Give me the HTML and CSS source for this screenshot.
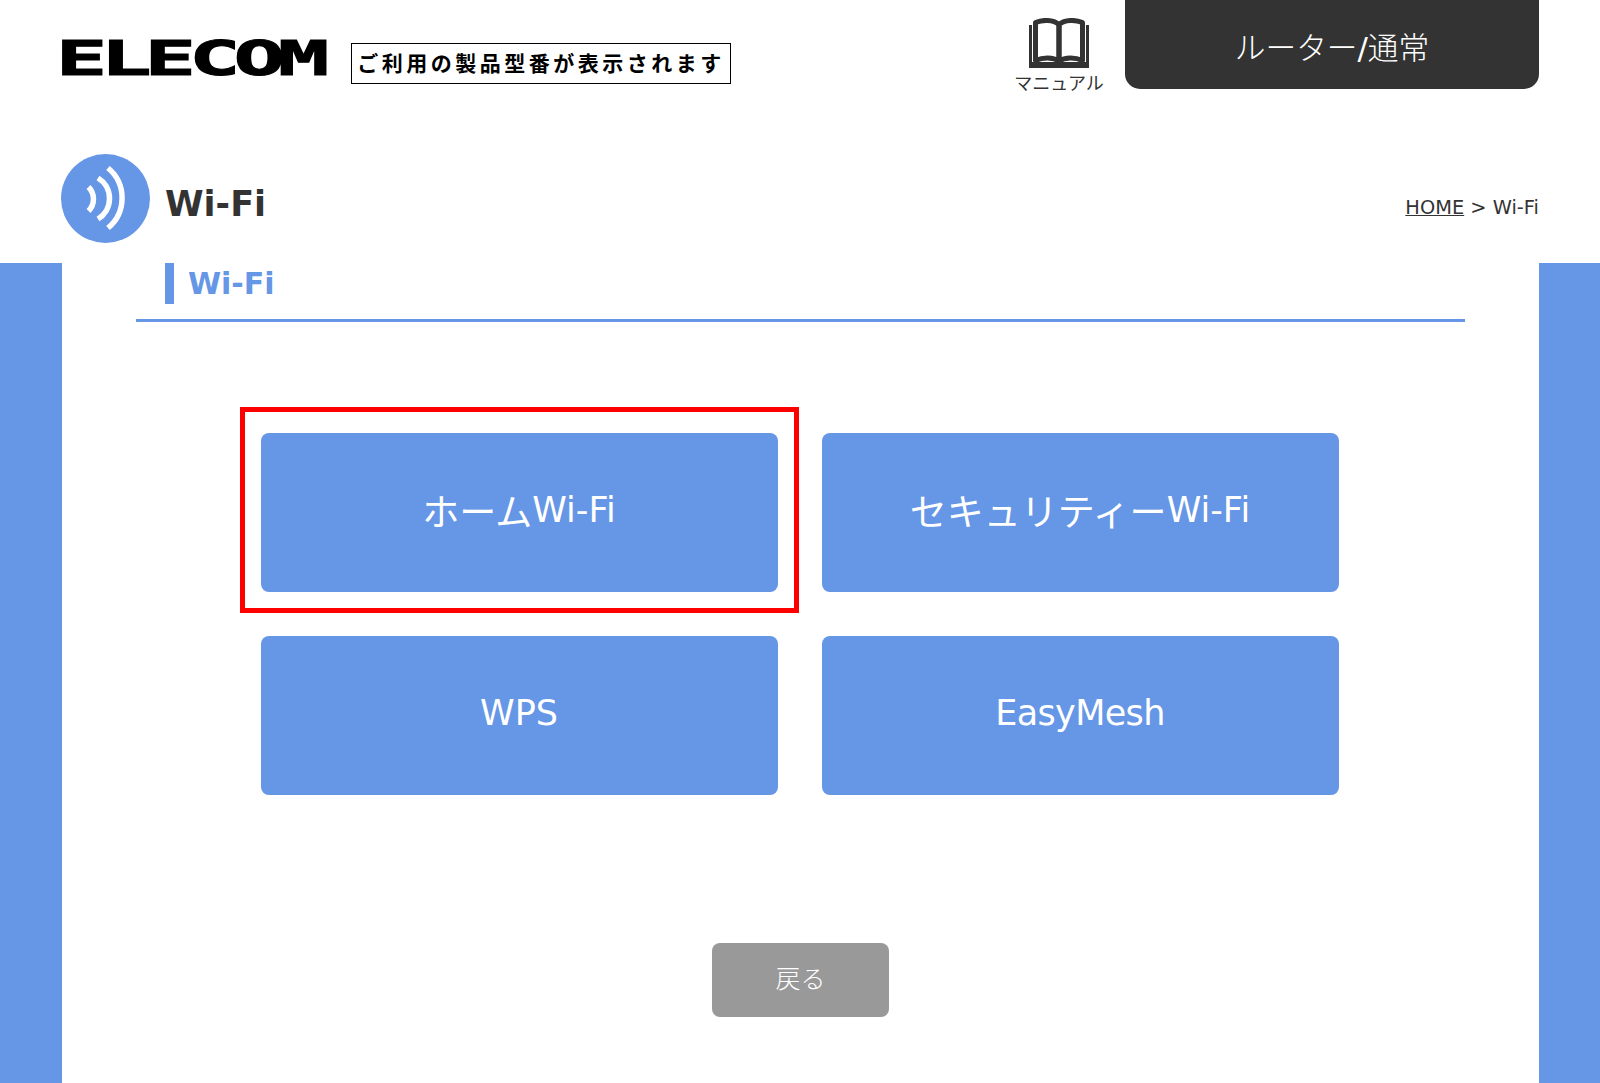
FILE: index.html
```html
<!DOCTYPE html>
<html lang="ja">
<head>
  <meta charset="UTF-8">
  <meta name="viewport" content="width=device-width, initial-scale=1.0">
  <title>Wi-Fi</title>
  <link rel="stylesheet" href="styles.css">
</head>
<body>
  <header class="top-bar">
    <div class="brand">
      <div class="logo">ELECOM</div>
      <div class="model-name">ご利用の製品型番が表示されます</div>
    </div>
    <div class="top-right">
      <a class="manual" href="#">
        <svg class="manual-icon" viewBox="0 0 60 50" fill="none" stroke="#333">
          <path d="M1.5 7V48.5H58.5V7" stroke-width="3"/>
          <path d="M6.5 4.5C14 1.5 24 1.5 30 6.5V43C24 39 14 39 6.5 42.5Z" stroke-width="5" stroke-linejoin="round"/>
          <path d="M53.5 4.5C46 1.5 36 1.5 30 6.5V43C36 39 46 39 53.5 42.5Z" stroke-width="5" stroke-linejoin="round"/>
          <path d="M3 46.5H57" stroke-width="5"/>
        </svg>
        <span>マニュアル</span>
      </a>
      <div class="mode-tab"><span class="jp">ルーター</span>/<span class="jp">通常</span></div>
    </div>
  </header>

  <div class="title-row">
    <div class="title-left">
      <svg class="title-icon" viewBox="0 0 89 89">
        <circle cx="44.5" cy="44.5" r="44.5" fill="#6696e6"/>
        <g fill="none" stroke="#fff" stroke-width="5.5">
          <path d="M27.5 33A17 17 0 0 1 27.5 57"/>
          <path d="M37 24A24 24 0 0 1 37 65"/>
          <path d="M47 14A39 39 0 0 1 47 74"/>
        </g>
      </svg>
      <h1>Wi-Fi</h1>
    </div>
    <div class="breadcrumb"><a href="#">HOME</a> &gt; Wi-Fi</div>
  </div>

  <main class="main">
    <div class="content">
      <div class="section-head">
        <h2>Wi-Fi</h2>
      </div>
      <div class="menu-grid">
        <a class="menu-btn selected" href="#"><span class="jp">ホーム</span>Wi-Fi</a>
        <a class="menu-btn" href="#"><span class="jp">セキュリティー</span>Wi-Fi</a>
        <a class="menu-btn" href="#">WPS</a>
        <a class="menu-btn tight" href="#">EasyMesh</a>
      </div>
      <div class="back-row">
        <a class="back-btn" href="#">戻る</a>
      </div>
    </div>
  </main>
</body>
</html>
```

FILE: styles.css
```css
* {
  box-sizing: border-box;
}

html, body {
  margin: 0;
  height: 100%;
  overflow: hidden;
}

body {
  display: flex;
  flex-direction: column;
  font-family: "DejaVu Sans", "Noto Sans CJK JP", sans-serif;
  color: #333;
  background: #fff;
}

a {
  color: inherit;
}

.jp {
  font-family: "Noto Sans CJK JP", sans-serif;
  font-weight: 300;
}

.top-bar {
  display: flex;
  justify-content: space-between;
  height: 154px;
  padding: 0 61px;
}

.brand {
  display: flex;
  align-items: flex-start;
}

.logo {
  width: 267px;
  margin-top: 33px;
  font-family: "DejaVu Sans Mono", monospace;
  font-size: 48px;
  line-height: 50px;
  font-weight: 700;
  letter-spacing: -3.8px;
  color: #000;
  -webkit-text-stroke: 1px #000;
  transform: translateX(-5px) scaleX(1.77);
  transform-origin: left center;
  white-space: nowrap;
}

.model-name {
  width: 380px;
  height: 41px;
  margin: 43px 0 0 23px;
  border: 1px solid #000;
  font-family: "Noto Sans CJK JP", sans-serif;
  font-size: 21px;
  line-height: 37px;
  font-weight: 700;
  letter-spacing: 3.5px;
  color: #000;
  text-align: center;
  white-space: nowrap;
}

.top-right {
  display: flex;
  align-items: flex-start;
}

.manual {
  display: flex;
  flex-direction: column;
  align-items: center;
  width: 90px;
  margin-top: 18px;
  margin-right: 21px;
  font-size: 18px;
  line-height: 24px;
  font-family: "Noto Sans CJK JP", sans-serif;
  font-weight: 400;
  text-decoration: none;
}

.manual-icon {
  display: block;
  width: 60px;
  height: 50px;
  margin-bottom: 2px;
}

.mode-tab {
  width: 414px;
  height: 89px;
  padding-top: 24px;
  background: #333;
  border-radius: 0 0 15px 15px;
  color: #fff;
  font-size: 30.7px;
  line-height: 44px;
  text-align: center;
}

.title-row {
  display: flex;
  justify-content: space-between;
  align-items: flex-start;
  height: 109px;
  padding: 0 61px;
}

.title-left {
  display: flex;
  align-items: center;
  gap: 15px;
}

.title-icon {
  display: block;
  width: 89px;
  height: 89px;
}

h1 {
  margin: 10px 0 0;
  font-size: 35px;
  line-height: 50px;
  font-weight: 700;
}

.breadcrumb {
  margin-top: 40px;
  font-size: 19.4px;
  line-height: 28px;
}

.main {
  flex: 1;
  padding: 0 61px 0 62px;
  background: #6696e6;
}

.content {
  height: 100%;
  padding: 0 74px;
  background: #fff;
}

.section-head {
  height: 59px;
  padding-left: 29px;
  border-bottom: 3px solid #6696e6;
}

h2 {
  height: 41px;
  margin: 0;
  padding-left: 14px;
  border-left: 9px solid #6696e6;
  color: #6696e6;
  font-size: 30px;
  line-height: 41px;
  font-weight: 700;
}

.menu-grid {
  display: grid;
  grid-template-columns: 517px 517px;
  grid-auto-rows: 159px;
  gap: 44px 44px;
  margin-top: 111px;
  padding-right: 2px;
  justify-content: center;
}

.menu-btn {
  position: relative;
  display: flex;
  align-items: center;
  justify-content: center;
  padding-bottom: 6px;
  background: #6696e6;
  border-radius: 8px;
  color: #fff;
  font-size: 35px;
  line-height: 44px;
  text-decoration: none;
  white-space: nowrap;
}

.menu-btn .jp {
  font-size: 37px;
  font-weight: 400;
  vertical-align: 2px;
}

.menu-btn.tight {
  letter-spacing: -0.65px;
}

.menu-btn.selected::after {
  content: "";
  position: absolute;
  top: -26px;
  right: -21px;
  bottom: -21px;
  left: -21px;
  border: 5px solid #f00;
}

.back-row {
  display: flex;
  justify-content: center;
  margin-top: 148px;
}

.back-btn {
  display: flex;
  align-items: center;
  justify-content: center;
  width: 177px;
  height: 74px;
  padding-bottom: 7px;
  background: #999;
  border-radius: 8px;
  color: #fff;
  font-family: "Noto Sans CJK JP", sans-serif;
  font-size: 25px;
  font-weight: 300;
  text-decoration: none;
}
```
